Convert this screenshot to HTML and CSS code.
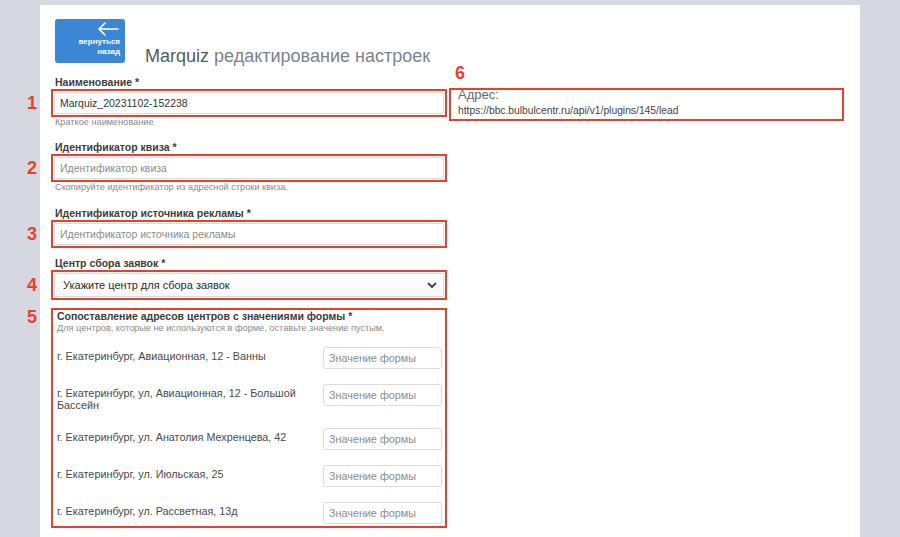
FILE: index.html
```html
<!DOCTYPE html>
<html lang="ru">
<head>
<meta charset="utf-8">
<title>Marquiz редактирование настроек</title>
<link rel="stylesheet" href="styles.css">
</head>
<body>
<div class="panel">
  <div class="layout">
    <div class="col-left">
      <div class="header">
        <a class="back-btn" href="#">
          <svg class="back-arrow" width="22" height="14" viewBox="0 0 22 14"><path d="M21 7H2M8 1L2 7l6 6" fill="none" stroke="#fff" stroke-width="1.6" stroke-linecap="round" stroke-linejoin="round"/></svg>
          <span class="back-text">вернуться<br>назад</span>
        </a>
        <h1 class="title"><span class="title-brand">Marquiz</span> редактирование настроек</h1>
      </div>

      <div class="field f1">
        <div class="label">Наименование *</div>
        <div class="mark">
          <span class="num">1</span>
          <div class="control value">Marquiz_20231102-152238</div>
        </div>
        <div class="help">Краткое наименование</div>
      </div>

      <div class="field f2">
        <div class="label">Идентификатор квиза *</div>
        <div class="mark">
          <span class="num">2</span>
          <div class="control placeholder">Идентификатор квиза</div>
        </div>
        <div class="help">Скопируйте идентификатор из адресной строки квиза.</div>
      </div>

      <div class="field f3">
        <div class="label">Идентификатор источника рекламы *</div>
        <div class="mark">
          <span class="num">3</span>
          <div class="control placeholder">Идентификатор источника рекламы</div>
        </div>
      </div>

      <div class="field f4">
        <div class="label">Центр сбора заявок *</div>
        <div class="mark">
          <span class="num">4</span>
          <div class="control select">
            <span>Укажите центр для сбора заявок</span>
            <svg class="chev" width="10" height="7" viewBox="0 0 10 7"><path d="M1.5 1.5L5 5l3.5-3.5" fill="none" stroke="#444" stroke-width="1.8" stroke-linecap="round" stroke-linejoin="round"/></svg>
          </div>
        </div>
      </div>

      <div class="mark map">
        <span class="num num-top">5</span>
        <div class="label map-label">Сопоставление адресов центров с значениями формы *</div>
        <div class="help map-help">Для центров, которые не используются в форме, оставьте значение пустым.</div>
        <div class="map-row">
          <div class="addr">г. Екатеринбург, Авиационная, 12 - Ванны</div>
          <div class="small-input">Значение формы</div>
        </div>
        <div class="map-row">
          <div class="addr">г. Екатеринбург, ул, Авиационная, 12 - Большой Бассейн</div>
          <div class="small-input">Значение формы</div>
        </div>
        <div class="map-row">
          <div class="addr">г. Екатеринбург, ул. Анатолия Мехренцева, 42</div>
          <div class="small-input">Значение формы</div>
        </div>
        <div class="map-row">
          <div class="addr">г. Екатеринбург, ул. Июльская, 25</div>
          <div class="small-input">Значение формы</div>
        </div>
        <div class="map-row">
          <div class="addr">г. Екатеринбург, ул. Рассветная, 13д</div>
          <div class="small-input">Значение формы</div>
        </div>
      </div>
    </div>

    <div class="col-right">
      <span class="num-6">6</span>
      <div class="addr-box">
        <div class="addr-title">Адрес:</div>
        <div class="addr-url">https://bbc.bulbulcentr.ru/api/v1/plugins/145/lead</div>
      </div>
    </div>
  </div>
</div>
</body>
</html>
```

FILE: styles.css
```css
* { box-sizing: border-box; }

html, body {
  margin: 0;
  padding: 0;
  background: #d5d8e0;
  font-family: "Liberation Sans", Arial, Helvetica, sans-serif;
}

body {
  height: 537px;
  overflow: hidden;
}

.panel {
  margin: 5px 0 0 40px;
  width: 820px;
  height: 532px;
  background: #fff;
  padding: 14px 0 0 11px;
}

.layout {
  display: grid;
  grid-template-columns: 396px 395px;
  column-gap: 2px;
  align-items: start;
}

/* header */
.header {
  display: flex;
  align-items: flex-end;
  gap: 20px;
  padding-left: 4px;
  margin-bottom: 13px;
}

.back-btn {
  width: 70px;
  height: 44px;
  background: #3b87d5;
  border-radius: 3px;
  display: flex;
  flex-direction: column;
  align-items: flex-end;
  padding: 3px 5px 0 0;
  text-decoration: none;
  flex-shrink: 0;
}

.back-arrow {
  display: block;
  margin-right: 1px;
}

.back-text {
  color: #fff;
  font-size: 8px;
  font-weight: bold;
  line-height: 10px;
  text-align: right;
  margin-top: 1px;
}

.title {
  margin: 0 0 -3px 0;
  font-size: 18px;
  font-weight: normal;
  line-height: 20px;
  color: #7b838e;
  white-space: nowrap;
}

.title-brand {
  color: #545a62;
}

/* fields */
.f1 { margin-bottom: 14px; }
.f2 { margin-bottom: 15px; }
.f3 { margin-bottom: 9px; }
.f4 { margin-bottom: 8px; }

.label {
  font-size: 10.5px;
  font-weight: bold;
  line-height: 12px;
  color: #3c3c3c;
  padding-left: 4px;
  margin-bottom: 1px;
  white-space: nowrap;
}

.help {
  font-size: 9.2px;
  line-height: 10px;
  color: #8a8a8a;
  padding-left: 4px;
  white-space: nowrap;
}

.mark {
  position: relative;
  border: 2px solid #e8402f;
  padding: 1px;
}

.num {
  position: absolute;
  right: calc(100% + 16px);
  top: 50%;
  transform: translateY(-50%);
  font-size: 18px;
  font-weight: bold;
  line-height: 18px;
  color: #e8402f;
}

.num-top {
  top: -2px;
  transform: none;
}

.control {
  height: 22px;
  border: 1px solid #dcdcdc;
  border-radius: 2px;
  padding: 0 5px;
  font-size: 10.5px;
  line-height: 20px;
  white-space: nowrap;
  overflow: hidden;
}

.value { color: #333; }
.placeholder { color: #8c8c8c; }

.select {
  height: 24px;
  line-height: 22px;
  font-size: 11px;
  color: #2e2e2e;
  display: flex;
  justify-content: space-between;
  align-items: center;
  padding: 0 6px 0 8px;
  background: linear-gradient(#ffffff, #f7f7f7);
}

.chev { display: block; }

/* mapping block */
.map {
  padding: 0 3px 2px 2px;
}

.map-label {
  padding-left: 2px;
  margin-bottom: 1px;
}

.map-help {
  padding-left: 2px;
  margin-bottom: 14px;
}

.map-row {
  display: flex;
  align-items: flex-start;
  justify-content: space-between;
  margin-bottom: 15px;
}

.map-row:last-child { margin-bottom: 0; }

.addr {
  width: 250px;
  padding: 3px 0 2px 2px;
  font-size: 10.8px;
  line-height: 12px;
  color: #4a4a4a;
}

.small-input {
  width: 119px;
  height: 22px;
  border: 1px solid #dcdcdc;
  border-radius: 3px;
  padding: 0 5px;
  font-size: 10.8px;
  line-height: 20px;
  color: #8c8c8c;
  white-space: nowrap;
}

/* right column */
.col-right {
  padding-top: 45px;
}

.num-6 {
  display: block;
  font-size: 18px;
  font-weight: bold;
  line-height: 18px;
  color: #e8402f;
  padding-left: 6px;
  margin-bottom: 6px;
}

.addr-box {
  border: 2px solid #e8402f;
  height: 33px;
  padding: 0 7px;
}

.addr-title {
  font-size: 13px;
  line-height: 14px;
  color: #686868;
  margin-top: -2px;
}

.addr-url {
  font-size: 10.3px;
  line-height: 12px;
  color: #444;
  margin-top: 3px;
  white-space: nowrap;
}
```
